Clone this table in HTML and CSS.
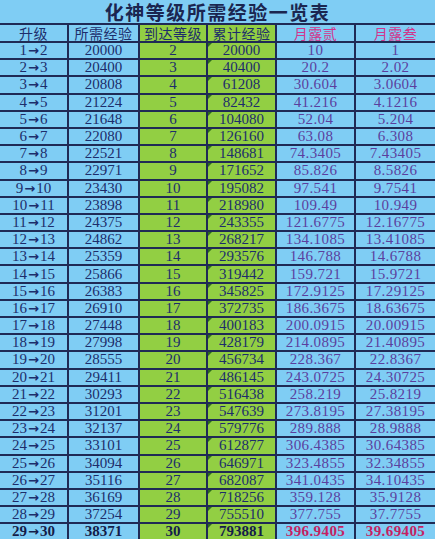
FILE: index.html
```html
<!DOCTYPE html>
<html lang="zh">
<head>
<meta charset="utf-8">
<link rel="stylesheet" href="styles.css">
</head>
<body>
<table class="sheet">
<colgroup><col class="c1"><col class="c2"><col class="c3"><col class="c4"><col class="c5"><col class="c6"></colgroup>
<thead>
<tr class="title"><th colspan="6">化神等级所需经验一览表</th></tr>
<tr class="head"><th>升级</th><th>所需经验</th><th class="g">到达等级</th><th class="g">累计经验</th><th class="m">月露贰</th><th class="m">月露叁</th></tr>
</thead>
<tbody>
<tr><td>1<span class="ar">→</span>2</td><td>20000</td><td class="g">2</td><td class="g t">20000</td><td class="p">10</td><td class="p">1</td></tr>
<tr><td>2<span class="ar">→</span>3</td><td>20400</td><td class="g">3</td><td class="g t">40400</td><td class="p">20.2</td><td class="p">2.02</td></tr>
<tr><td>3<span class="ar">→</span>4</td><td>20808</td><td class="g">4</td><td class="g t">61208</td><td class="p">30.604</td><td class="p">3.0604</td></tr>
<tr><td>4<span class="ar">→</span>5</td><td>21224</td><td class="g">5</td><td class="g t">82432</td><td class="p">41.216</td><td class="p">4.1216</td></tr>
<tr><td>5<span class="ar">→</span>6</td><td>21648</td><td class="g">6</td><td class="g t">104080</td><td class="p">52.04</td><td class="p">5.204</td></tr>
<tr><td>6<span class="ar">→</span>7</td><td>22080</td><td class="g">7</td><td class="g t">126160</td><td class="p">63.08</td><td class="p">6.308</td></tr>
<tr><td>7<span class="ar">→</span>8</td><td>22521</td><td class="g">8</td><td class="g t">148681</td><td class="p">74.3405</td><td class="p">7.43405</td></tr>
<tr><td>8<span class="ar">→</span>9</td><td>22971</td><td class="g">9</td><td class="g t">171652</td><td class="p">85.826</td><td class="p">8.5826</td></tr>
<tr><td>9<span class="ar">→</span>10</td><td>23430</td><td class="g">10</td><td class="g t">195082</td><td class="p">97.541</td><td class="p">9.7541</td></tr>
<tr><td>10<span class="ar">→</span>11</td><td>23898</td><td class="g">11</td><td class="g t">218980</td><td class="p">109.49</td><td class="p">10.949</td></tr>
<tr><td>11<span class="ar">→</span>12</td><td>24375</td><td class="g">12</td><td class="g t">243355</td><td class="p">121.6775</td><td class="p">12.16775</td></tr>
<tr><td>12<span class="ar">→</span>13</td><td>24862</td><td class="g">13</td><td class="g t">268217</td><td class="p">134.1085</td><td class="p">13.41085</td></tr>
<tr><td>13<span class="ar">→</span>14</td><td>25359</td><td class="g">14</td><td class="g t">293576</td><td class="p">146.788</td><td class="p">14.6788</td></tr>
<tr><td>14<span class="ar">→</span>15</td><td>25866</td><td class="g">15</td><td class="g t">319442</td><td class="p">159.721</td><td class="p">15.9721</td></tr>
<tr><td>15<span class="ar">→</span>16</td><td>26383</td><td class="g">16</td><td class="g t">345825</td><td class="p">172.9125</td><td class="p">17.29125</td></tr>
<tr><td>16<span class="ar">→</span>17</td><td>26910</td><td class="g">17</td><td class="g t">372735</td><td class="p">186.3675</td><td class="p">18.63675</td></tr>
<tr><td>17<span class="ar">→</span>18</td><td>27448</td><td class="g">18</td><td class="g t">400183</td><td class="p">200.0915</td><td class="p">20.00915</td></tr>
<tr><td>18<span class="ar">→</span>19</td><td>27998</td><td class="g">19</td><td class="g t">428179</td><td class="p">214.0895</td><td class="p">21.40895</td></tr>
<tr><td>19<span class="ar">→</span>20</td><td>28555</td><td class="g">20</td><td class="g t">456734</td><td class="p">228.367</td><td class="p">22.8367</td></tr>
<tr><td>20<span class="ar">→</span>21</td><td>29411</td><td class="g">21</td><td class="g t">486145</td><td class="p">243.0725</td><td class="p">24.30725</td></tr>
<tr><td>21<span class="ar">→</span>22</td><td>30293</td><td class="g">22</td><td class="g t">516438</td><td class="p">258.219</td><td class="p">25.8219</td></tr>
<tr><td>22<span class="ar">→</span>23</td><td>31201</td><td class="g">23</td><td class="g t">547639</td><td class="p">273.8195</td><td class="p">27.38195</td></tr>
<tr><td>23<span class="ar">→</span>24</td><td>32137</td><td class="g">24</td><td class="g t">579776</td><td class="p">289.888</td><td class="p">28.9888</td></tr>
<tr><td>24<span class="ar">→</span>25</td><td>33101</td><td class="g">25</td><td class="g t">612877</td><td class="p">306.4385</td><td class="p">30.64385</td></tr>
<tr><td>25<span class="ar">→</span>26</td><td>34094</td><td class="g">26</td><td class="g t">646971</td><td class="p">323.4855</td><td class="p">32.34855</td></tr>
<tr><td>26<span class="ar">→</span>27</td><td>35116</td><td class="g">27</td><td class="g t">682087</td><td class="p">341.0435</td><td class="p">34.10435</td></tr>
<tr><td>27<span class="ar">→</span>28</td><td>36169</td><td class="g">28</td><td class="g t">718256</td><td class="p">359.128</td><td class="p">35.9128</td></tr>
<tr><td>28<span class="ar">→</span>29</td><td>37254</td><td class="g">29</td><td class="g t">755510</td><td class="p">377.755</td><td class="p">37.7755</td></tr>
<tr class="last"><td>29<span class="ar">→</span>30</td><td>38371</td><td class="g">30</td><td class="g t">793881</td><td class="r">396.9405</td><td class="r">39.69405</td></tr>
</tbody>
</table>
</body>
</html>
```
FILE: styles.css
```css
html, body {
  margin: 0;
  padding: 0;
  background: #7fcdf4;
  overflow: hidden;
}
.sheet {
  width: 435px;
  table-layout: fixed;
  border-collapse: collapse;
  font-family: "Liberation Serif", "Noto Sans CJK SC", serif;
  color: #1d2d6b;
}
.c1 { width: 68px; }
.c2 { width: 71px; }
.c3 { width: 68px; }
.c4 { width: 69px; }
.c5 { width: 79px; }
.c6 { width: 80px; }
.sheet th, .sheet td {
  border: 2px solid #1f2a55;
  background: #7fcdf4;
  text-align: center;
  vertical-align: middle;
  padding: 0;
  white-space: nowrap;
}
.sheet td { overflow: hidden; }
.title th {
  border-top: 0;
  border-left: 0;
  border-right: 0;
  height: 22px;
  padding-top: 1px;
  font-family: "Noto Sans CJK SC", sans-serif;
  font-weight: 700;
  font-size: 19px;
  line-height: 22px;
  color: #1b2650;
  letter-spacing: 1.5px;
}
.head th {
  height: 16px;
  font-family: "Noto Sans CJK SC", sans-serif;
  font-weight: 400;
  font-size: 14px;
  line-height: 16px;
  letter-spacing: 0.5px;
  color: #1d2d6b;
}
.head th.m { color: #d2358c; }
.sheet td {
  height: 15.2px;
  font-size: 15px;
  line-height: 15px;
}
.ar {
  font-family: "DejaVu Sans", sans-serif;
  font-size: 13px;
  font-weight: 700;
  margin: 0 1px;
}
.sheet td:first-child, .head th:first-child { border-left: 0; }
.sheet td:last-child, .head th:last-child { border-right: 0; }
.sheet .g { background: #92cf43; }
.sheet td.p { color: #5b3f9e; letter-spacing: 0.4px; }
.sheet td.t { position: relative; }
.sheet td.t::before {
  content: "";
  position: absolute;
  left: 0;
  top: 0;
  border-top: 4px solid #2c6b1c;
  border-right: 4px solid transparent;
}
.last td { font-weight: 700; color: #141d4a; }
.last td.r { color: #c51f62; letter-spacing: 0.4px; }
```
